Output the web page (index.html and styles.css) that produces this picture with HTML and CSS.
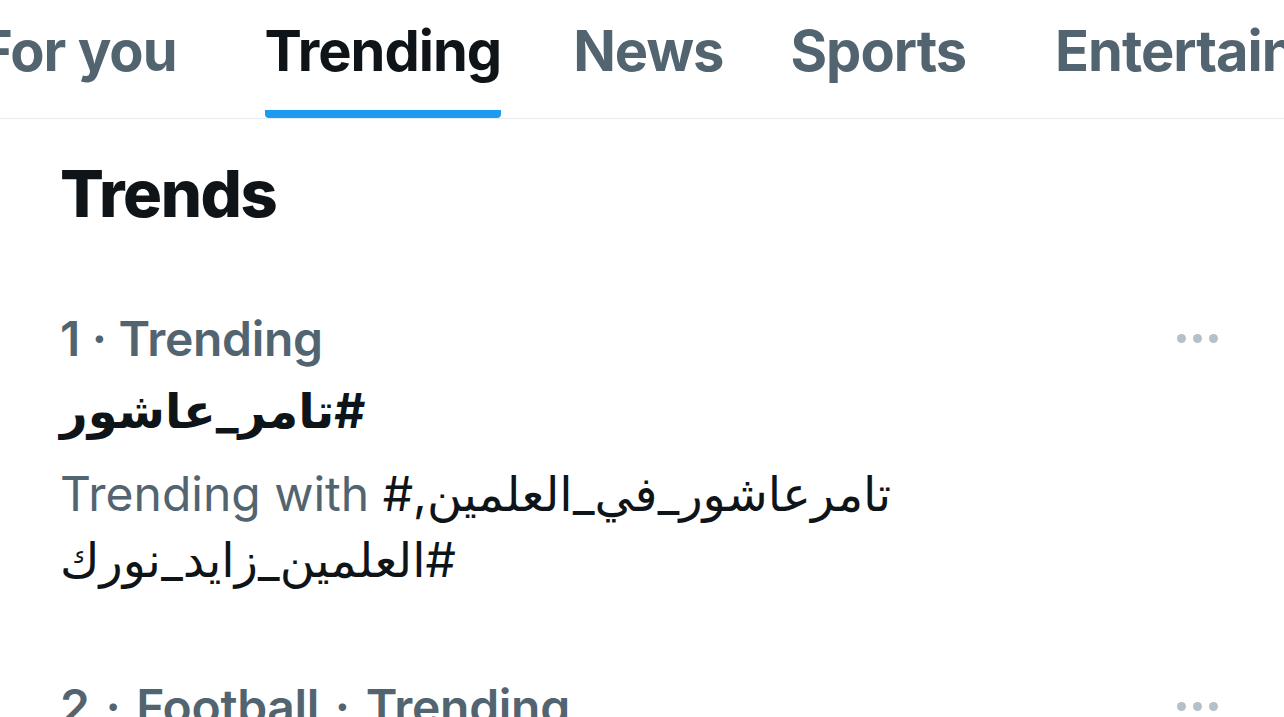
FILE: index.html
```html
<!DOCTYPE html>
<html lang="en">
<head>
<meta charset="utf-8">
<title>Trending</title>
<link rel="stylesheet" href="styles.css">
</head>
<body>
<div class="page">
  <nav class="tabs">
    <div class="tab tab-foryou"><span class="tab-label">For you</span></div>
    <div class="tab tab-active tab-trending"><span class="tab-label">Trending</span></div>
    <div class="tab tab-news"><span class="tab-label">News</span></div>
    <div class="tab tab-sports"><span class="tab-label">Sports</span></div>
    <div class="tab tab-ent"><span class="tab-label">Entertainment</span></div>
  </nav>
  <main class="content">
    <h1 class="heading">Trends</h1>
    <section class="trend">
      <div class="trend-body">
        <div class="trend-meta">1 · Trending</div>
        <div class="trend-tag" dir="rtl">#تامر_عاشور</div>
        <div class="trend-with">Trending with <span class="ar">#تامرعاشور_في_العلمين, #العلمين_زايد_نورك</span></div>
      </div>
      <div class="more" aria-label="More"><span class="dot"></span><span class="dot"></span><span class="dot"></span></div>
    </section>
    <section class="trend trend-second">
      <div class="trend-body">
        <div class="trend-meta trend-meta-wide">2 · Football · Trending</div>
      </div>
      <div class="more" aria-label="More"><span class="dot"></span><span class="dot"></span><span class="dot"></span></div>
    </section>
  </main>
</div>
</body>
</html>
```
FILE: styles.css
```css
html, body {
  margin: 0;
  padding: 0;
  background: #ffffff;
}
body {
  font-family: "Inter", "DejaVu Sans", sans-serif;
  color: #0f1419;
  overflow: hidden;
  width: 1284px;
  height: 717px;
}
.page {
  width: 1284px;
  overflow: hidden;
}
.tabs {
  display: flex;
  height: 118px;
  border-bottom: 1px solid #e7ebee;
  white-space: nowrap;
}
.tab {
  display: flex;
  flex-direction: column;
  justify-content: flex-end;
  flex-shrink: 0;
  font-size: 56px;
  font-weight: 700;
  color: #536471;
  letter-spacing: -1px;
}
.tab-foryou {
  margin-left: -20px;
}
.tab-trending {
  margin-left: 88px;
}
.tab-news {
  margin-left: 72px;
}
.tab-sports {
  margin-left: 67px;
}
.tab-ent {
  margin-left: 89px;
}
.tab-label {
  display: block;
  line-height: 1;
  padding-bottom: 31px;
  border-bottom: 8px solid transparent;
  border-radius: 4px;
}
.tab-active {
  color: #0f1419;
}
.tab-active .tab-label {
  border-bottom-color: #1d9bf0;
}
.content {
  padding: 0 60px;
}
.heading {
  margin: 0;
  padding-top: 35px;
  font-size: 65px;
  font-weight: 800;
  line-height: 80px;
  letter-spacing: -1.4px;
}
.trend {
  display: flex;
  align-items: flex-start;
  justify-content: space-between;
  padding-top: 77px;
}
.trend-second {
  padding-top: 86px;
}
.trend-body {
  display: flex;
  flex-direction: column;
}
.trend-meta {
  font-size: 48px;
  font-weight: 600;
  color: #536471;
  line-height: 56px;
  letter-spacing: -0.3px;
}
.trend-meta-wide {
  word-spacing: 4px;
}
.trend-tag {
  text-align: left;
  font-size: 48px;
  font-weight: 700;
  line-height: 88px;
  align-self: flex-start;
}
.trend-with {
  margin-top: 6px;
  font-size: 48px;
  color: #536471;
  line-height: 66px;
  width: 900px;
}
.ar {
  color: #0f1419;
}
.more {
  display: flex;
  gap: 7px;
  padding-top: 23px;
  margin-right: 6px;
}
.dot {
  width: 9px;
  height: 9px;
  border-radius: 50%;
  background: #b4c1cb;
}
```
